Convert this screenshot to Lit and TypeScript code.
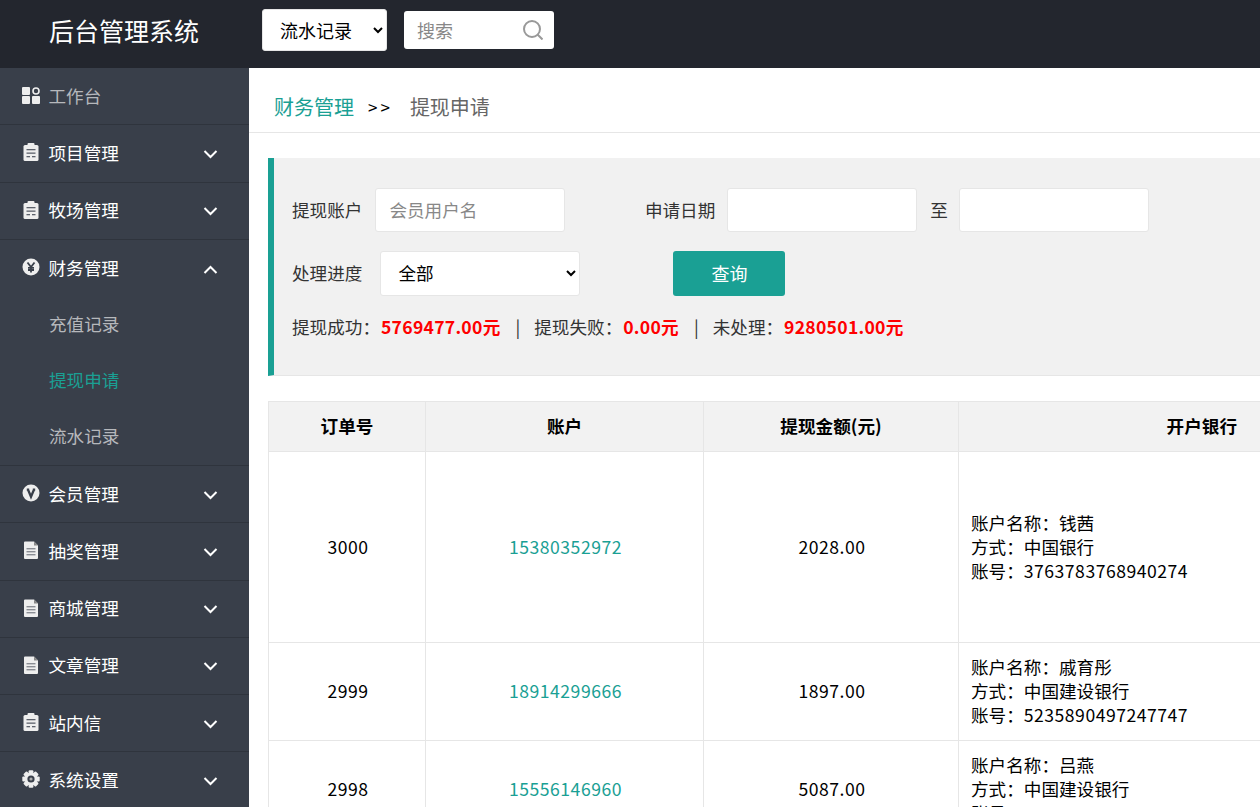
import { LitElement, html, css, svg } from 'lit';

const icons = {
  dash: svg`<rect x="0" y="1" width="8" height="8" rx="1"/><rect x="0" y="10" width="8" height="8" rx="1"/><rect x="10" y="10" width="8" height="8" rx="1"/><circle cx="14" cy="5" r="3" fill="none" stroke="#eee" stroke-width="1.6"/>`,
  clip: svg`<rect x="1.5" y="2" width="15" height="16" rx="1.5"/><rect x="5.5" y="0" width="7" height="3" rx="1"/>
    <g fill="#5c616b"><rect x="4.5" y="6" width="9" height="1.3"/><rect x="4.5" y="9.5" width="9" height="1.3"/><rect x="4.5" y="13" width="3.5" height="1.3"/><rect x="10" y="13" width="3.5" height="1.3"/></g>`,
  yen: svg`<circle cx="9" cy="9" r="8.5"/><path d="M5.5 4.5 9 9l3.5-4.5M9 9v5.5M6 9.8h6M6 12h6" fill="none" stroke="#393f4a" stroke-width="1.8"/>`,
  vip: svg`<circle cx="9" cy="9" r="8.5"/><path d="M4.8 5.6h2.4M10.8 5.6h2.4M6 5.6 9 12.6l3-7" fill="none" stroke="#393f4a" stroke-width="2.4"/>`,
  file: svg`<path d="M2 1.5a1 1 0 0 1 1-1h9l4 4V17a1 1 0 0 1-1 1H3a1 1 0 0 1-1-1z"/><path d="M12 .5v4h4z" fill="#888"/>
    <g fill="#8a8d94"><rect x="4.5" y="7" width="9" height="1.4"/><rect x="4.5" y="10" width="9" height="1.4"/><rect x="4.5" y="13" width="9" height="1.4"/></g>`,
  gear: svg`<g>${[0, 45, 90, 135].map(
    (a) => svg`<rect x="6.6" y="0.3" width="4.8" height="17.4" rx="1" transform="rotate(${a} 9 9)"/>`
  )}</g><circle cx="9" cy="9" r="6.4"/><circle cx="9" cy="9" r="3.6" fill="#393f4a"/><circle cx="9" cy="9" r="1.6" fill="#aaa"/>`,
};

const nav = [
  { label: '工作台', icon: 'dash', leaf: true },
  { label: '项目管理', icon: 'clip' },
  { label: '牧场管理', icon: 'clip' },
  { label: '财务管理', icon: 'yen', open: true, children: ['充值记录', '提现申请', '流水记录'] },
  { label: '会员管理', icon: 'vip' },
  { label: '抽奖管理', icon: 'file' },
  { label: '商城管理', icon: 'file' },
  { label: '文章管理', icon: 'file' },
  { label: '站内信', icon: 'clip' },
  { label: '系统设置', icon: 'gear' },
];

const rows = [
  { id: 3000, user: '15380352972', amount: '2028.00', name: '钱茜', bank: '中国银行', card: '3763783768940274', tall: true },
  { id: 2999, user: '18914299666', amount: '1897.00', name: '戚育彤', bank: '中国建设银行', card: '5235890497247747' },
  { id: 2998, user: '15556146960', amount: '5087.00', name: '吕燕', bank: '中国建设银行', card: '3784040395390015' },
];

export class AppRoot extends LitElement {
  static styles = css`
    :host {
      display: block;
      height: 100vh;
      overflow: hidden;
      font-family: "Noto Sans CJK SC", "Noto Sans", sans-serif;
      font-size: 17.6px;
      color: #000;
      background: #fff;
    }

    .top {
      height: 68px;
      box-sizing: border-box;
      padding-bottom: 8px;
      display: flex;
      align-items: center;
      background: #23262e;
    }

    .logo {
      width: 248px;
      text-align: center;
      font-size: 25px;
      color: #fff;
    }

    .top select {
      margin-left: 14px;
      width: 125px;
      height: 42px;
      padding: 0 0 0 13px;
      font: inherit;
      font-size: 18px;
      border: 1px solid #e6e6e6;
      border-radius: 3px;
      background: #fff;
      color: #000;
    }

    .search {
      margin-left: 17px;
      width: 150px;
      height: 38px;
      display: flex;
      align-items: center;
      padding: 0 11px 0 13px;
      box-sizing: border-box;
      background: #fff;
      border-radius: 3px;
      color: #888;
      font-size: 18px;
      justify-content: space-between;
    }

    .body {
      display: flex;
      height: calc(100vh - 68px);
    }

    aside {
      width: 249px;
      flex: none;
      background: #393f4a;
      overflow: hidden;
    }

    .item {
      height: 57.25px;
      box-sizing: border-box;
      display: flex;
      align-items: center;
      padding: 0 31px 2px 22px;
      border-bottom: 1px solid #2f343d;
      color: #fff;
    }

    .item.leaf {
      color: #b6b8bc;
    }

    .item .ico {
      width: 18px;
      height: 18px;
      fill: #eee;
      margin-right: 8.5px;
      flex: none;
    }

    .item .label {
      flex: 1;
    }

    .chev {
      width: 15px;
      height: 9px;
      margin-top: 4px;
      fill: none;
      stroke: #fff;
      stroke-width: 2;
    }

    .sub {
      height: 56px;
      line-height: 54px;
      padding-left: 49px;
      color: #b6b8bc;
    }

    .sub.on {
      color: #1aa094;
    }

    .group {
      border-bottom: 1px solid #2f343d;
    }

    main {
      flex: 1;
      min-width: 0;
      overflow: hidden;
    }

    .crumb {
      height: 65px;
      box-sizing: border-box;
      border-bottom: 1px solid #e6e6e6;
      display: flex;
      align-items: center;
      padding: 12px 0 0 25px;
      font-size: 20px;
      color: #666;
    }

    .crumb a {
      color: #1aa094;
    }

    .crumb span {
      margin: 0 17px 0 14px;
      font-size: 17px;
      letter-spacing: 3px;
      color: #000;
    }

    .filter {
      margin: 25px 0 25px 19px;
      padding: 30px 0 36px 18px;
      border-left: 6px solid #1aa094;
      border-bottom: 1px solid #e6e6e6;
      background: #f1f1f1;
      color: #333;
    }

    .line {
      display: flex;
      align-items: center;
    }

    .line + .line {
      margin-top: 19px;
    }

    .line label {
      margin-bottom: 2px;
    }

    .filter input {
      width: 190px;
      height: 44px;
      box-sizing: border-box;
      padding: 0 13px 2px;
      font: inherit;
      border: 1px solid #e6e6e6;
      border-radius: 3px;
      background: #fff;
      margin: 0 13px 0 12px;
    }

    .filter input::placeholder {
      color: #888;
    }

    .filter input.first {
      margin: 0 79.5px 0 13px;
    }

    .filter input.last {
      margin: 0 0 0 11.5px;
    }

    .filter select {
      width: 200px;
      height: 45px;
      margin: 0 93px 0 18px;
      padding: 0 0 2px 13px;
      font: inherit;
      color: #000;
      border: 1px solid #e6e6e6;
      border-radius: 3px;
      background: #fff;
    }

    button {
      width: 112px;
      height: 45px;
      padding: 0 0 2px;
      border: 0;
      border-radius: 3px;
      background: #1aa094;
      color: #fff;
      font: inherit;
      font-size: 18px;
    }

    .stats {
      margin-top: 19px;
      height: 24px;
      line-height: 24px;
      white-space: nowrap;
    }

    .stats b {
      color: #f00;
      margin-left: 1px;
      letter-spacing: 0.25px;
    }

    .stats i {
      font-style: normal;
      margin: 0 14px 0 15px;
    }

    table {
      margin-left: 19px;
      border-collapse: collapse;
      table-layout: fixed;
      width: 1178px;
    }

    th, td {
      border: 1px solid #e6e6e6;
      text-align: center;
      padding: 0 12px 2px;
      line-height: 24px;
    }

    th {
      height: 47px;
      background: #f2f2f2;
      font-weight: 700;
    }

    th.bank {
      text-align: right;
      padding-right: 208px;
    }

    td {
      height: 95px;
      padding: 0 11px 2px 13px;
      letter-spacing: 0.5px;
    }

    tr.tall td {
      height: 190px;
      padding-bottom: 0;
    }

    td a {
      color: #1aa094;
    }

    td.bank {
      padding-left: 12px;
      text-align: left;
      letter-spacing: 0;
    }

    td.bank span {
      letter-spacing: 0.5px;
    }
  `;

  renderNav(n) {
    return html`
      <div class="item ${n.leaf ? 'leaf' : ''}" style=${n.children ? 'border-bottom:0' : ''}>
        <svg class="ico" viewBox="0 0 18 18">${icons[n.icon]}</svg>
        <span class="label">${n.label}</span>
        ${n.leaf ? '' : html`<svg class="chev" viewBox="0 0 15 9">
          <polyline points=${n.open ? '1.5,8 7.5,2 13.5,8' : '1.5,1 7.5,7 13.5,1'}></polyline>
        </svg>`}
      </div>
      ${n.children ? html`<div class="group">
        ${n.children.map((c) => html`<div class="sub ${c === '提现申请' ? 'on' : ''}">${c}</div>`)}
      </div>` : ''}
    `;
  }

  render() {
    return html`
      <div class="top">
        <div class="logo">后台管理系统</div>
        <select><option>流水记录</option></select>
        <div class="search">
          <span>搜索</span>
          <svg width="20" height="20" viewBox="0 0 20 20" fill="none" stroke="#999" stroke-width="2">
            <circle cx="9" cy="9" r="8"></circle><line x1="14.5" y1="14.5" x2="19.5" y2="19.5"></line>
          </svg>
        </div>
      </div>
      <div class="body">
        <aside>${nav.map((n) => this.renderNav(n))}</aside>
        <main>
          <div class="crumb"><a>财务管理</a><span>>></span>提现申请</div>
          <div class="filter">
            <div class="line">
              <label>提现账户</label><input class="first" placeholder="会员用户名" />
              <label>申请日期</label><input /><label>至</label><input class="last" />
            </div>
            <div class="line">
              <label>处理进度</label><select><option>全部</option></select>
              <button>查询</button>
            </div>
            <div class="stats">
              提现成功：<b>5769477.00元</b><i>|</i>提现失败：<b>0.00元</b><i>|</i>未处理：<b>9280501.00元</b>
            </div>
          </div>
          <table>
            <colgroup>
              <col style="width:157px" /><col style="width:278px" /><col style="width:255px" /><col />
            </colgroup>
            <thead>
              <tr><th>订单号</th><th>账户</th><th>提现金额(元)</th><th class="bank">开户银行</th></tr>
            </thead>
            <tbody>
              ${rows.map((r) => html`
                <tr class=${r.tall ? 'tall' : ''}>
                  <td>${r.id}</td>
                  <td><a>${r.user}</a></td>
                  <td>${r.amount}</td>
                  <td class="bank">账户名称：${r.name}<br />方式：${r.bank}<br />账号：<span>${r.card}</span></td>
                </tr>
              `)}
            </tbody>
          </table>
        </main>
      </div>
    `;
  }
}

customElements.define('app-root', AppRoot);
